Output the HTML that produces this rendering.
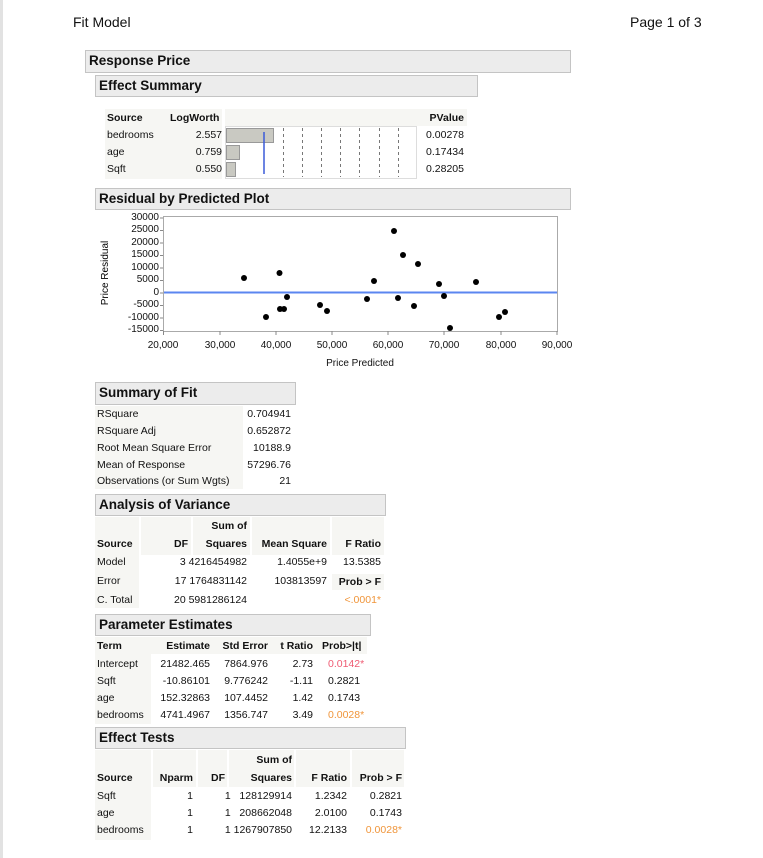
<!DOCTYPE html>
<html><head><meta charset="utf-8">
<style>
body{margin:0;width:763px;height:858px;background:#fff;position:relative;overflow:hidden;font-family:"Liberation Sans",Arial,sans-serif;color:#111}
.lb{position:absolute;left:0;top:0;width:3px;height:858px;background:#e2e2e2}
.a{position:absolute;white-space:nowrap;font-size:10.5px;line-height:14px;height:14px}
.s{font-size:10px}
.b{font-weight:bold}
.r{text-align:right}
.h{position:absolute;background:#ececec;border:1.5px solid #c4c4c4;box-sizing:border-box;font-weight:bold;font-size:13.5px;line-height:19px;padding-left:3px}
.bg{position:absolute;background:#f6f6f3}
.or{color:#f0953a}.pk{color:#ef5a72}
</style></head><body>
<div class="lb"></div>
<div class="a" style="left:73px;top:14px;font-size:14px;line-height:16px;height:16px">Fit Model</div>
<div class="a" style="left:630px;top:14px;font-size:14px;line-height:16px;height:16px">Page 1 of 3</div>

<div class="h" style="left:85px;top:50px;width:486px;height:23px">Response Price</div>
<div class="h" style="left:95px;top:75px;width:383px;height:22px">Effect Summary</div>

<div class="bg" style="left:105px;top:109px;width:117px;height:70px"></div>
<div class="bg" style="left:225px;top:109px;width:192px;height:17px"></div>
<div class="bg" style="left:417px;top:109px;width:50px;height:17px"></div>
<div class="a b" style="left:107px;top:111px">Source</div>
<div class="a b" style="left:170px;top:111px">LogWorth</div>
<div class="a b r" style="right:299px;top:111px">PValue</div>
<div class="a" style="left:107px;top:128px">bedrooms</div>
<div class="a" style="left:107px;top:145px">age</div>
<div class="a" style="left:107px;top:162px">Sqft</div>
<div class="a r" style="right:541px;top:128px">2.557</div>
<div class="a r" style="right:541px;top:145px">0.759</div>
<div class="a r" style="right:541px;top:162px">0.550</div>
<div class="a r" style="right:299px;top:128px">0.00278</div>
<div class="a r" style="right:299px;top:145px">0.17434</div>
<div class="a r" style="right:299px;top:162px">0.28205</div>
<svg style="position:absolute;left:0;top:0" width="763" height="858">
<rect x="225.5" y="126.5" width="191" height="52" fill="#fff" stroke="#ddd"/>
<g stroke="#777" stroke-width="1" stroke-dasharray="3,3">
<line x1="283.5" y1="128" x2="283.5" y2="177"/><line x1="302.5" y1="128" x2="302.5" y2="177"/>
<line x1="321.5" y1="128" x2="321.5" y2="177"/><line x1="340.5" y1="128" x2="340.5" y2="177"/>
<line x1="359.5" y1="128" x2="359.5" y2="177"/><line x1="379.5" y1="128" x2="379.5" y2="177"/>
<line x1="398.5" y1="128" x2="398.5" y2="177"/></g>
<g fill="#c9c9c2" stroke="#999">
<rect x="226.5" y="128.5" width="47" height="14"/>
<rect x="226.5" y="145.5" width="13" height="14"/>
<rect x="226.5" y="162.5" width="9" height="14"/></g>
<line x1="264" y1="132" x2="264" y2="174" stroke="#3b5bd9" stroke-width="1.5"/>

<rect x="163.5" y="216.5" width="394" height="115" fill="none" stroke="#aaa"/>
<g stroke="#888">
<line x1="160" y1="218" x2="163" y2="218"/><line x1="160" y1="230.5" x2="163" y2="230.5"/>
<line x1="160" y1="243" x2="163" y2="243"/><line x1="160" y1="255.5" x2="163" y2="255.5"/>
<line x1="160" y1="268" x2="163" y2="268"/><line x1="160" y1="280.5" x2="163" y2="280.5"/>
<line x1="160" y1="293" x2="163" y2="293"/><line x1="160" y1="305.5" x2="163" y2="305.5"/>
<line x1="160" y1="318" x2="163" y2="318"/><line x1="160" y1="330.5" x2="163" y2="330.5"/>
<line x1="163.5" y1="331" x2="163.5" y2="335"/><line x1="220" y1="331" x2="220" y2="335"/>
<line x1="276" y1="331" x2="276" y2="335"/><line x1="332" y1="331" x2="332" y2="335"/>
<line x1="388" y1="331" x2="388" y2="335"/><line x1="444" y1="331" x2="444" y2="335"/>
<line x1="501" y1="331" x2="501" y2="335"/><line x1="557" y1="331" x2="557" y2="335"/>
</g>
<line x1="164" y1="292.5" x2="557" y2="292.5" stroke="#5b86f0" stroke-width="2"/>
<g fill="#000">
<circle cx="244" cy="278" r="3"/><circle cx="279.5" cy="273" r="3"/><circle cx="266" cy="317" r="3"/>
<circle cx="280" cy="309" r="3"/><circle cx="284" cy="309" r="3"/><circle cx="287" cy="297" r="3"/>
<circle cx="320" cy="305" r="3"/><circle cx="327" cy="311" r="3"/><circle cx="367" cy="299" r="3"/>
<circle cx="374" cy="281" r="3"/><circle cx="394" cy="231" r="3"/><circle cx="403" cy="255" r="3"/>
<circle cx="398" cy="298" r="3"/><circle cx="418" cy="264" r="3"/><circle cx="414" cy="306" r="3"/>
<circle cx="439" cy="284" r="3"/><circle cx="444" cy="296" r="3"/><circle cx="450" cy="328" r="3"/>
<circle cx="476" cy="282" r="3"/><circle cx="499" cy="317" r="3"/><circle cx="505" cy="312" r="3"/>
</g>
<text x="108" y="273" font-size="10" font-family="Liberation Sans,sans-serif" text-anchor="middle" transform="rotate(-90 108 273)">Price Residual</text>
</svg>
<div class="h" style="left:95px;top:188px;width:476px;height:22px">Residual by Predicted Plot</div>
<div class="a s r" style="right:604px;top:211px">30000</div>
<div class="a s r" style="right:604px;top:223px">25000</div>
<div class="a s r" style="right:604px;top:236px">20000</div>
<div class="a s r" style="right:604px;top:248px">15000</div>
<div class="a s r" style="right:604px;top:261px">10000</div>
<div class="a s r" style="right:604px;top:273px">5000</div>
<div class="a s r" style="right:604px;top:286px">0</div>
<div class="a s r" style="right:604px;top:298px">-5000</div>
<div class="a s r" style="right:604px;top:311px">-10000</div>
<div class="a s r" style="right:604px;top:323px">-15000</div>
<div class="a s" style="left:143px;top:339px;width:40px;text-align:center">20,000</div>
<div class="a s" style="left:200px;top:339px;width:40px;text-align:center">30,000</div>
<div class="a s" style="left:256px;top:339px;width:40px;text-align:center">40,000</div>
<div class="a s" style="left:312px;top:339px;width:40px;text-align:center">50,000</div>
<div class="a s" style="left:368px;top:339px;width:40px;text-align:center">60,000</div>
<div class="a s" style="left:424px;top:339px;width:40px;text-align:center">70,000</div>
<div class="a s" style="left:481px;top:339px;width:40px;text-align:center">80,000</div>
<div class="a s" style="left:537px;top:339px;width:40px;text-align:center">90,000</div>
<div class="a s" style="left:320px;top:357px;width:80px;text-align:center">Price Predicted</div>

<div class="h" style="left:95px;top:382px;width:201px;height:23px">Summary of Fit</div>
<div class="bg" style="left:95px;top:406px;width:148px;height:83px"></div>
<div class="a" style="left:97px;top:407px">RSquare</div>
<div class="a" style="left:97px;top:424px">RSquare Adj</div>
<div class="a" style="left:97px;top:441px">Root Mean Square Error</div>
<div class="a" style="left:97px;top:458px">Mean of Response</div>
<div class="a" style="left:97px;top:474px">Observations (or Sum Wgts)</div>
<div class="a r" style="right:472px;top:407px">0.704941</div>
<div class="a r" style="right:472px;top:424px">0.652872</div>
<div class="a r" style="right:472px;top:441px">10188.9</div>
<div class="a r" style="right:472px;top:458px">57296.76</div>
<div class="a r" style="right:472px;top:474px">21</div>

<div class="h" style="left:95px;top:494px;width:291px;height:22px">Analysis of Variance</div>
<div class="bg" style="left:95px;top:517px;width:44px;height:38px"></div>
<div class="bg" style="left:95px;top:555px;width:44px;height:53px"></div>
<div class="bg" style="left:141px;top:517px;width:50px;height:38px"></div>
<div class="bg" style="left:193px;top:517px;width:57px;height:38px"></div>
<div class="bg" style="left:252px;top:517px;width:78px;height:38px"></div>
<div class="bg" style="left:332px;top:517px;width:52px;height:38px"></div>
<div class="bg" style="left:332px;top:574px;width:52px;height:16px"></div>
<div class="a b r" style="right:516px;top:519px">Sum of</div>
<div class="a b" style="left:97px;top:537px">Source</div>
<div class="a b r" style="right:575px;top:537px">DF</div>
<div class="a b r" style="right:516px;top:537px">Squares</div>
<div class="a b r" style="right:436px;top:537px">Mean Square</div>
<div class="a b r" style="right:382px;top:537px">F Ratio</div>
<div class="a" style="left:97px;top:555px">Model</div>
<div class="a" style="left:97px;top:574px">Error</div>
<div class="a" style="left:97px;top:593px">C. Total</div>
<div class="a r" style="right:516px;top:555px">3&nbsp;4216454982</div>
<div class="a r" style="right:516px;top:574px">17&nbsp;1764831142</div>
<div class="a r" style="right:516px;top:593px">20&nbsp;5981286124</div>
<div class="a r" style="right:436px;top:555px">1.4055e+9</div>
<div class="a r" style="right:436px;top:574px">103813597</div>
<div class="a r" style="right:382px;top:555px">13.5385</div>
<div class="a b r" style="right:382px;top:575px">Prob &gt; F</div>
<div class="a r or" style="right:382px;top:593px">&lt;.0001*</div>

<div class="h" style="left:95px;top:614px;width:276px;height:22px">Parameter Estimates</div>
<div class="bg" style="left:95px;top:637px;width:272px;height:17px"></div>
<div class="bg" style="left:95px;top:654px;width:56px;height:70px"></div>
<div class="a b" style="left:97px;top:639px">Term</div>
<div class="a b r" style="right:553px;top:639px">Estimate</div>
<div class="a b r" style="right:495px;top:639px">Std Error</div>
<div class="a b r" style="right:450px;top:639px">t Ratio</div>
<div class="a b" style="left:322px;top:639px">Prob&gt;|t|</div>
<div class="a" style="left:97px;top:657px">Intercept</div>
<div class="a" style="left:97px;top:674px">Sqft</div>
<div class="a" style="left:97px;top:691px">age</div>
<div class="a" style="left:97px;top:708px">bedrooms</div>
<div class="a r" style="right:553px;top:657px">21482.465</div>
<div class="a r" style="right:553px;top:674px">-10.86101</div>
<div class="a r" style="right:553px;top:691px">152.32863</div>
<div class="a r" style="right:553px;top:708px">4741.4967</div>
<div class="a r" style="right:495px;top:657px">7864.976</div>
<div class="a r" style="right:495px;top:674px">9.776242</div>
<div class="a r" style="right:495px;top:691px">107.4452</div>
<div class="a r" style="right:495px;top:708px">1356.747</div>
<div class="a r" style="right:450px;top:657px">2.73</div>
<div class="a r" style="right:450px;top:674px">-1.11</div>
<div class="a r" style="right:450px;top:691px">1.42</div>
<div class="a r" style="right:450px;top:708px">3.49</div>
<div class="a pk" style="left:328px;top:657px">0.0142*</div>
<div class="a" style="left:328px;top:674px">0.2821</div>
<div class="a" style="left:328px;top:691px">0.1743</div>
<div class="a or" style="left:328px;top:708px">0.0028*</div>

<div class="h" style="left:95px;top:727px;width:311px;height:22px">Effect Tests</div>
<div class="bg" style="left:95px;top:750px;width:56px;height:90px"></div>
<div class="bg" style="left:153px;top:750px;width:43px;height:37px"></div>
<div class="bg" style="left:198px;top:750px;width:29px;height:37px"></div>
<div class="bg" style="left:229px;top:750px;width:65px;height:37px"></div>
<div class="bg" style="left:296px;top:750px;width:54px;height:37px"></div>
<div class="bg" style="left:352px;top:750px;width:52px;height:37px"></div>
<div class="a b r" style="right:471px;top:753px">Sum of</div>
<div class="a b" style="left:97px;top:771px">Source</div>
<div class="a b r" style="right:570px;top:771px">Nparm</div>
<div class="a b r" style="right:538px;top:771px">DF</div>
<div class="a b r" style="right:471px;top:771px">Squares</div>
<div class="a b r" style="right:416px;top:771px">F Ratio</div>
<div class="a b r" style="right:361px;top:771px">Prob &gt; F</div>
<div class="a" style="left:97px;top:789px">Sqft</div>
<div class="a" style="left:97px;top:806px">age</div>
<div class="a" style="left:97px;top:823px">bedrooms</div>
<div class="a r" style="right:570px;top:789px">1</div>
<div class="a r" style="right:570px;top:806px">1</div>
<div class="a r" style="right:570px;top:823px">1</div>
<div class="a r" style="right:471px;top:789px">1&nbsp;&nbsp;&nbsp;128129914</div>
<div class="a r" style="right:471px;top:806px">1&nbsp;&nbsp;&nbsp;208662048</div>
<div class="a r" style="right:471px;top:823px">1&nbsp;1267907850</div>
<div class="a r" style="right:416px;top:789px">1.2342</div>
<div class="a r" style="right:416px;top:806px">2.0100</div>
<div class="a r" style="right:416px;top:823px">12.2133</div>
<div class="a r" style="right:361px;top:789px">0.2821</div>
<div class="a r" style="right:361px;top:806px">0.1743</div>
<div class="a r or" style="right:361px;top:823px">0.0028*</div>
</body></html>
